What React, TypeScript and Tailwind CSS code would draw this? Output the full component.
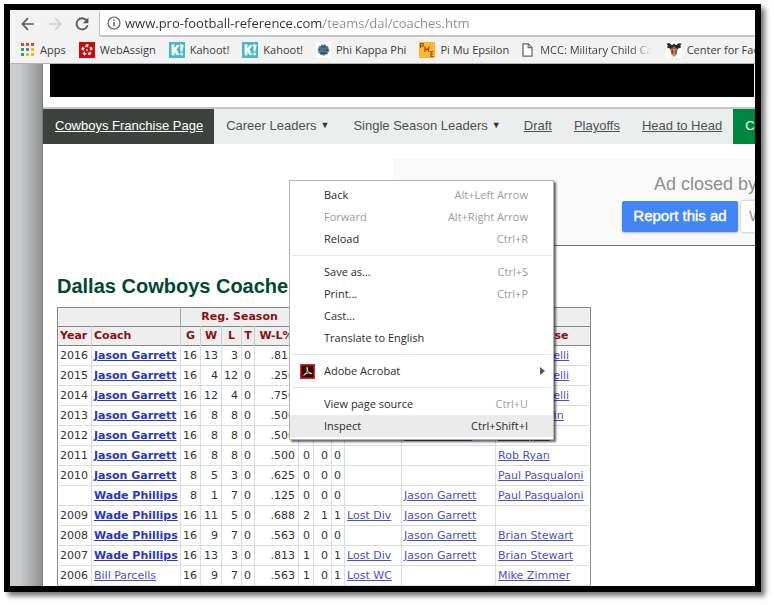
import React from 'react';

type Coach = {
  year: string;
  name: string;
  current?: boolean;
  reg: [string, string, string, string, string];
  post?: [string, string, string];
  result?: string;
  offense?: string;
  defense?: string;
};

const coaches: Coach[] = [
  { year: '2016', name: 'Jason Garrett', current: true, reg: ['16', '13', '3', '0', '.813'], defense: 'Rod Marinelli' },
  { year: '2015', name: 'Jason Garrett', current: true, reg: ['16', '4', '12', '0', '.250'], defense: 'Rod Marinelli' },
  { year: '2014', name: 'Jason Garrett', current: true, reg: ['16', '12', '4', '0', '.750'], defense: 'Rod Marinelli' },
  { year: '2013', name: 'Jason Garrett', current: true, reg: ['16', '8', '8', '0', '.500'], defense: 'Monte Kiffin' },
  { year: '2012', name: 'Jason Garrett', current: true, reg: ['16', '8', '8', '0', '.500'], offense: 'Bill Callahan', defense: 'Rob Ryan' },
  { year: '2011', name: 'Jason Garrett', current: true, reg: ['16', '8', '8', '0', '.500'], post: ['0', '0', '0'], defense: 'Rob Ryan' },
  { year: '2010', name: 'Jason Garrett', current: true, reg: ['8', '5', '3', '0', '.625'], post: ['0', '0', '0'], defense: 'Paul Pasqualoni' },
  { year: '', name: 'Wade Phillips', current: true, reg: ['8', '1', '7', '0', '.125'], post: ['0', '0', '0'], offense: 'Jason Garrett', defense: 'Paul Pasqualoni' },
  { year: '2009', name: 'Wade Phillips', current: true, reg: ['16', '11', '5', '0', '.688'], post: ['2', '1', '1'], result: 'Lost Div', offense: 'Jason Garrett' },
  { year: '2008', name: 'Wade Phillips', current: true, reg: ['16', '9', '7', '0', '.563'], post: ['0', '0', '0'], offense: 'Jason Garrett', defense: 'Brian Stewart' },
  { year: '2007', name: 'Wade Phillips', current: true, reg: ['16', '13', '3', '0', '.813'], post: ['1', '0', '1'], result: 'Lost Div', offense: 'Jason Garrett', defense: 'Brian Stewart' },
  { year: '2006', name: 'Bill Parcells', reg: ['16', '9', '7', '0', '.563'], post: ['1', '0', '1'], result: 'Lost WC', defense: 'Mike Zimmer' },
];

const appColors = ['#e0453a', '#e0453a', '#e0453a', '#3a9e55', '#4285f4', '#f2b51d', '#3a9e55', '#f2b51d', '#f2b51d'];

function AppsIcon() {
  return (
    <svg width="14" height="14" viewBox="0 0 14 14" aria-hidden="true">
      {appColors.map((c, i) => (
        <rect key={i} x={(i % 3) * 5} y={Math.floor(i / 3) * 5} width="3" height="3" fill={c} />
      ))}
    </svg>
  );
}

function WebAssignIcon() {
  return (
    <svg width="16" height="16" viewBox="0 0 16 16" aria-hidden="true">
      <rect width="16" height="16" fill="#c20d12" />
      <g fill="#fff">
        {[0, 72, 144, 216, 288].map((a) => (
          <path key={a} d="M6.8 2.2 9.6 2.6 9 5.6 7.6 4.4 6.2 5.4Z" transform={`rotate(${a} 8 8)`} />
        ))}
      </g>
      <circle cx="8" cy="8" r="1" fill="#f0b0b0" />
    </svg>
  );
}

function KahootIcon() {
  return (
    <svg width="16" height="16" viewBox="0 0 16 16" aria-hidden="true">
      <rect width="16" height="16" fill="#45b8cc" />
      <path d="M2.6 2.6 5.4 2.2V6.6L7.6 3H10.6L7.6 7.6 10.4 13H7.4L5.4 9.6V13.4L2.6 13Z" fill="#fff" />
      <path d="M11.2 2 14.6 3 13.4 9.4H11.6ZM11.4 10.8H13.8V13.2H11.4Z" fill="#fff" />
    </svg>
  );
}

function PhiIcon() {
  return (
    <svg width="15" height="16" viewBox="0 0 15 16" aria-hidden="true">
      <rect width="15" height="16" fill="#fff" />
      <circle cx="7.5" cy="8" r="4.8" fill="#31556f" />
      <circle cx="7.5" cy="8" r="5.1" fill="none" stroke="#54758c" strokeWidth="1.2" strokeDasharray="2 1" />
      <path d="M1.8 6.2h11.4M1.8 9.6h11.4" stroke="#6b899c" strokeWidth=".9" />
      <path d="M4.5 8h6" stroke="#a9bcc8" strokeWidth="1" strokeDasharray="1 1" />
    </svg>
  );
}

function PiMuIcon() {
  return (
    <svg width="16" height="16" viewBox="0 0 16 16" aria-hidden="true">
      <rect width="16" height="16" fill="#fbb829" />
      <g fill="none" stroke="#a5482c" strokeWidth="1.2">
        <path d="M1.5 6V1.5H4.2V4H1.5" />
        <path d="M6 10V5.6L7.8 8 9.6 5.6V10" />
        <path d="M14.5 9.5H12V14.5H14.5M12 12H14" />
      </g>
    </svg>
  );
}

function FileIcon() {
  return (
    <svg width="11" height="14" viewBox="0 0 11 14" aria-hidden="true">
      <path d="M1 .8H6.4L10 4.4V13.2H1Z" fill="#fff" stroke="#6a6a6a" strokeWidth="1.3" />
      <path d="M6.2 1V4.7H10" fill="none" stroke="#6a6a6a" strokeWidth="1.2" />
    </svg>
  );
}

function CrestIcon() {
  return (
    <svg width="16" height="16" viewBox="0 0 16 16" aria-hidden="true">
      <rect width="16" height="16" fill="#fff" />
      <path d="M.3 1.4 3.6 1.2 6 3.2 8 1.4 10 3.2 12.4 1.2 15.7 1.4 14.4 3.6 15 5.4 11.8 6.8 11 9H5L4.2 6.8 1 5.4 1.8 3.6Z" fill="#2e2623" />
      <path d="M4.8 6.6H11.2V11Q10.8 13.8 8 15.2 5.2 13.8 4.8 11Z" fill="#c49a55" />
      <path d="M5 8 7 7 7.4 12 5.4 11.6Z" fill="#b0303a" />
      <path d="M8.6 8.2 11 7.6 10.8 11.4 8.8 13Z" fill="#7b5a6e" />
      <path d="M6.6 4 8 5.2 9.4 4 9 6.4H7Z" fill="#8a7866" />
    </svg>
  );
}

function AcrobatIcon() {
  return (
    <svg width="15" height="15" viewBox="0 0 15 15" aria-hidden="true">
      <rect x=".75" y=".75" width="13.5" height="13.5" fill="#2b0d0c" stroke="#d8261c" strokeWidth="1.5" />
      <path
        d="M7.2 3.2C6.4 3.2 6.9 5.4 8 7.2 9 8.9 11 10.2 11.8 9.8 12.4 9.2 10.4 8.6 8.4 8.9 6.2 9.2 3.6 10.4 3.5 11.4 3.8 12.2 5.8 9.8 6.8 7.6 7.6 5.6 7.9 3.4 7.2 3.2Z"
        fill="none"
        stroke="#efe4e2"
        strokeWidth=".9"
      />
    </svg>
  );
}

const bookmarks = [
  { label: 'Apps', icon: <AppsIcon />, gap: 'gap-[5px]' },
  { label: 'WebAssign', icon: <WebAssignIcon />, gap: 'gap-[5px]' },
  { label: 'Kahoot!', icon: <KahootIcon />, gap: 'gap-[5px]' },
  { label: 'Kahoot!', icon: <KahootIcon />, gap: 'gap-[5px]' },
  { label: 'Phi Kappa Phi', icon: <PhiIcon />, gap: 'gap-[5px]' },
  { label: 'Pi Mu Epsilon', icon: <PiMuIcon />, gap: 'gap-[5px]' },
  { label: 'MCC: Military Child Ca', icon: <FileIcon />, gap: 'gap-[7px]', fade: true },
  { label: 'Center for Faculty', icon: <CrestIcon />, gap: 'gap-[5px]' },
];

function Toolbar() {
  return (
    <header className="shrink-0 overflow-hidden border-b border-[#b4b4b4] bg-[#f2f2f2] font-['Open_Sans','Noto_Sans',sans-serif]">
      <div className="flex h-[27px] items-stretch">
        <nav className="flex w-[89px] shrink-0 items-center gap-[13px] pl-[11px]" aria-label="History">
          <button aria-label="Back">
            <svg width="14" height="14" viewBox="0 0 14 14" fill="none" stroke="#5a5a5a" strokeWidth="1.7">
              <path d="M13 7H1.5M7 1.2 1.3 7 7 12.8" />
            </svg>
          </button>
          <button aria-label="Forward">
            <svg width="14" height="14" viewBox="0 0 14 14" fill="none" stroke="#d2d2d2" strokeWidth="1.7">
              <path d="M1 7H12.5M7 1.2 12.7 7 7 12.8" />
            </svg>
          </button>
          <button aria-label="Reload">
            <svg width="14" height="14" viewBox="0 0 14 14" fill="none">
              <path d="M11.6 3.4A5.6 5.6 0 1 0 12.6 8.2" stroke="#5a5a5a" strokeWidth="1.8" />
              <path d="M13.4.6V6.2H7.8Z" fill="#5a5a5a" />
            </svg>
          </button>
        </nav>
        <div className="flex grow items-center gap-1 rounded-l-[3px] border-b-2 border-l border-[#c4c4c4] bg-white pl-[7px]">
          <svg width="14" height="14" viewBox="0 0 14 14" fill="none" stroke="#5f5f5f" aria-hidden="true">
            <circle cx="7" cy="7" r="6" strokeWidth="1.2" />
            <path d="M7 6V10.4M7 3.4V4.9" strokeWidth="1.5" />
          </svg>
          <input
            aria-label="Address"
            readOnly
            value="www.pro-football-reference.com/teams/dal/coaches.htm"
            className="min-w-0 grow bg-[linear-gradient(90deg,#2f2f2f_198px,#8c8c8c_198px)] bg-clip-text text-[13px] leading-5 text-transparent outline-none"
          />
        </div>
      </div>
      <ul className="flex h-[26px] items-center gap-[13px] pl-[11px] text-[11px] leading-4 whitespace-nowrap text-[#3b3b3b]">
        {bookmarks.map((b, i) => (
          <li key={i} className="shrink-0">
            <a href="#" className={`flex items-center ${b.gap}`}>
              {b.icon}
              <span className={b.fade ? 'bg-[linear-gradient(90deg,#3b3b3b_80%,transparent)] bg-clip-text text-transparent' : ''}>{b.label}</span>
            </a>
          </li>
        ))}
      </ul>
    </header>
  );
}

function SiteNav() {
  return (
    <nav className="flex h-[37px] items-stretch overflow-hidden border-t-2 border-[#c3c7c7] bg-[#ebeeed] text-[13px] leading-[33px] whitespace-nowrap text-[#4e5252]">
      <a href="#" className="shrink-0 bg-[#3e423e] pr-[11px] pl-3 text-white underline">Cowboys Franchise Page</a>
      <button className="flex shrink-0 gap-1 px-3">Career Leaders <span className="text-[9px] text-[#333]">▼</span></button>
      <button className="flex shrink-0 gap-1 px-3">Single Season Leaders <span className="text-[9px] text-[#333]">▼</span></button>
      <a href="#" className="shrink-0 px-[11px] underline">Draft</a>
      <a href="#" className="shrink-0 px-[11px] underline">Playoffs</a>
      <a href="#" className="shrink-0 px-[11px] underline">Head to Head</a>
      <a href="#" className="shrink-0 bg-[#00863f] px-3 text-white">Coaches</a>
    </nav>
  );
}

function AdPanel() {
  return (
    <section className="mt-[15px] ml-[350px] flex h-[87px] flex-col items-start overflow-hidden border-b border-[#6d7278] bg-[#f9f9f9] pl-[229px] whitespace-nowrap">
      <p className="mt-[13px] pl-8 text-lg leading-6 text-[#8f8f8f]">Ad closed by Google</p>
      <div className="mt-[5px] flex gap-[3px]">
        <button className="h-[31px] w-[116px] shrink-0 rounded-xs bg-[#4285f4] text-[15px] text-white shadow-[0_1px_2px_#0004] [-webkit-text-stroke:0.4px_#fff]">Report this ad</button>
        <button className="h-[31px] shrink-0 rounded-xs bg-white px-2 text-[15px] text-[#8f8f8f] shadow-[0_0_3px_#0005]">Why this ad?</button>
      </div>
    </section>
  );
}

const colWidths = [
  'w-[34px]', 'w-[89px]', 'w-[20px]', 'w-[21px]', 'w-[20px]', 'w-[13px]', 'w-[44px]',
  'w-[15px]', 'w-[18px]', 'w-[13px]', 'w-[57px]', 'w-[94px]', 'w-[95px]',
];

const headings = ['Year', 'Coach', 'G', 'W', 'L', 'T', 'W-L%', '', '', '', '', '', 'Defense'];

function Link({ text, bold }: { text?: string; bold?: boolean }) {
  if (!text) return null;
  return <a href="#" className={bold ? 'font-bold text-[#2a35c4] underline' : 'text-[#4850c8] underline'}>{text}</a>;
}

function CoachTable() {
  return (
    <table className="w-[533px] table-fixed border-collapse border border-[#85888a] font-['DejaVu_Sans',sans-serif] text-[11px] leading-[19px] whitespace-nowrap text-[#333]">
      <colgroup>
        {colWidths.map((w, i) => <col key={i} className={w} />)}
      </colgroup>
      <thead className="bg-[#eeeeee] text-[#8b1010]">
        <tr className="h-[19px] border-b border-[#85888a] leading-[18px]">
          <td colSpan={2} className="border-r border-[#a5a8aa] p-0" />
          <th colSpan={5} className="border-r border-[#a5a8aa] p-0">Reg. Season</th>
          <td colSpan={4} className="border-r border-[#a5a8aa] p-0" />
          <td colSpan={2} className="p-0" />
        </tr>
        <tr className="h-[19px] border-b border-[#85888a] leading-[18px]">
          {headings.map((h, i) => (
            <th key={i} className={`border-r border-[#cfcfcf] last:border-r-[#85888a] ${i < 2 ? 'px-0.5 text-left' : 'px-0 text-center'} py-0`}>{h}</th>
          ))}
        </tr>
      </thead>
      <tbody>
        {coaches.map((c, i) => (
          <tr key={i} className="h-5 *:border-r *:border-b *:border-[#dcdcdc] *:py-0 *:pr-[3px] *:pl-0.5 *:last:border-r-[#85888a]">
            <td>{c.year}</td>
            <td><Link text={c.name} bold={c.current} /></td>
            {c.reg.map((v, j) => <td key={j} className="text-right">{v}</td>)}
            {(c.post ?? ['', '', '']).map((v, j) => <td key={j} className="text-right">{v}</td>)}
            <td><Link text={c.result} /></td>
            <td><Link text={c.offense} /></td>
            <td><Link text={c.defense} /></td>
          </tr>
        ))}
      </tbody>
    </table>
  );
}

type Item = { label: string; keys?: string; off?: boolean; active?: boolean; icon?: React.ReactNode; sub?: boolean };

const menuGroups: Item[][] = [
  [
    { label: 'Back', keys: 'Alt+Left Arrow' },
    { label: 'Forward', keys: 'Alt+Right Arrow', off: true },
    { label: 'Reload', keys: 'Ctrl+R' },
  ],
  [
    { label: 'Save as...', keys: 'Ctrl+S' },
    { label: 'Print...', keys: 'Ctrl+P' },
    { label: 'Cast...' },
    { label: 'Translate to English' },
  ],
  [{ label: 'Adobe Acrobat', icon: <AcrobatIcon />, sub: true }],
  [
    { label: 'View page source', keys: 'Ctrl+U' },
    { label: 'Inspect', keys: 'Ctrl+Shift+I', active: true },
  ],
];

function ContextMenu() {
  return (
    <div
      role="menu"
      className="absolute top-[170px] left-[279px] w-[265px] border border-[#b5b5b5] bg-white pt-[3px] pb-0.5 font-['Open_Sans','Noto_Sans',sans-serif] text-[11px] text-[#2b2b2b] shadow-[2px_2px_2px_#0009]"
    >
      {menuGroups.map((group, g) => (
        <React.Fragment key={g}>
          {g > 0 && <hr className="mx-0.5 my-[5px] border-[#e6e6e6]" />}
          {group.map((it) => (
            <button
              key={it.label}
              role="menuitem"
              disabled={it.off}
              className={`flex h-[22px] w-full items-center pr-[25px] text-left ${it.active ? 'bg-[#ebebeb]' : ''} ${it.off ? 'text-[#9c9c98]' : ''}`}
            >
              <span className="flex w-[34px] shrink-0 justify-start pl-2.5">{it.icon}</span>
              <span className="grow">{it.label}</span>
              {it.keys && <span className={it.active ? '' : 'text-[#9c9c98]'}>{it.keys}</span>}
              {it.sub && (
                <svg width="5" height="8" viewBox="0 0 5 8" className="-mr-[17px]" aria-hidden="true">
                  <path d="M0 0 5 4 0 8Z" fill="#555" />
                </svg>
              )}
            </button>
          ))}
        </React.Fragment>
      ))}
    </div>
  );
}

export default function App() {
  return (
    <div className="h-screen bg-white pt-1 pr-[13px] pb-[13px] pl-1 font-['Liberation_Sans',Arial,sans-serif]">
      <div className="relative flex h-full flex-col overflow-hidden border-6 border-black bg-white shadow-[4px_4px_5px_#0008]">
        <Toolbar />
        <div className="flex min-h-0 grow">
          <div className="w-[33px] shrink-0 border-r border-[#77797b] bg-linear-to-r from-[#cbcccd] from-30% to-[#8f9193]" />
          <main className="min-w-0 grow overflow-hidden">
            <div className="mr-px ml-[7px] h-[33px] bg-black" />
            <div className="h-[10px]" />
            <SiteNav />
            <AdPanel />
            <div className="pl-[14px]">
              <h1 className="mt-7 mb-2 text-xl leading-[25px] font-bold text-[#00492a]">Dallas Cowboys Coaches</h1>
              <CoachTable />
            </div>
          </main>
        </div>
        <ContextMenu />
      </div>
    </div>
  );
}
